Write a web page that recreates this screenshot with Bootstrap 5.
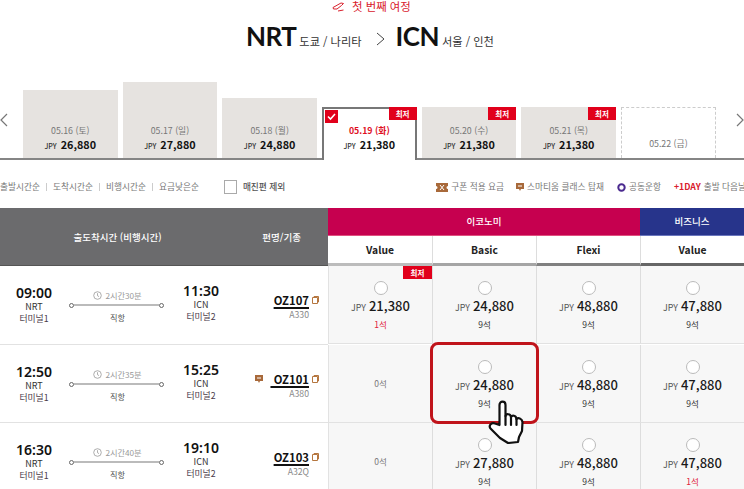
<!DOCTYPE html>
<html lang="ko">
<head>
<meta charset="utf-8">
<title>항공편 선택</title>
<link href="https://cdn.jsdelivr.net/npm/bootstrap@5.3.0/dist/css/bootstrap.min.css" rel="stylesheet">
<style>
html,body{width:744px;height:489px;overflow:hidden;background:#fff}
body{font-family:"Noto Sans CJK KR","Noto Sans",sans-serif;color:#222;font-size:9px;line-height:1.2}
.trip-label{height:13px;color:#d9202c;font-size:11.4px;line-height:13px;padding-left:332px;gap:8px}
.route-line{height:40px;margin-top:4px;padding-left:247px;align-items:baseline;padding-top:3px}
.code{font-family:"Lato","Noto Sans",sans-serif;font-size:26px;line-height:33px;font-weight:700;color:#111;letter-spacing:-.5px}
.code-first{margin-left:-1px}
.city{font-size:11.2px;color:#333;margin-left:3px}
.route-arrow{margin:0 10px 0 15px;align-self:center}
.strip{height:78px;margin-top:25px;border-bottom:2px solid #858585;align-items:flex-end}
.chev{width:8px;flex:none;margin-bottom:31px}
.chev-l{margin-right:15px}
.chev-r{margin-left:20px}
.bars{gap:5.2px;align-items:flex-end}
.bar{width:94.5px;background:#e6e3e0;text-align:center;padding-bottom:5px;position:relative;display:flex;flex-direction:column;justify-content:flex-end}
.h-a{height:68px}.h-b{height:76px}.h-c{height:60px}.h-d{height:51px}
.bar-date{color:#777;font-size:8.8px;line-height:13px}
.bar-price{font-size:10.8px;line-height:14px;font-weight:700;color:#111}
.bar-price span{font-size:7px;font-weight:500;color:#333;margin-right:4px}
.bar-on{background:#fff;border:2px solid #777;border-bottom:0;margin-bottom:-2px;height:53px;padding-bottom:7px}
.bar-on .bar-date{color:#e0101f;font-weight:700}
.bar-none{background:#fff;border:1px dashed #ccc;border-bottom:0;padding-bottom:8px}
.low-tag{position:absolute;top:0;right:0;width:28px;height:13px;background:#e1001b;color:#fff;font-size:7.5px;font-weight:700;line-height:13px;text-align:center}
.bar-on .low-tag{top:-2px;right:-2px}
.check-box{position:absolute;left:1px;top:1px;width:13px;height:13px;background:#e1001b}
.filters{height:41px;margin-top:7px;align-items:center;color:#777;font-size:8.7px;white-space:nowrap;padding-bottom:1px;overflow:hidden;width:744px}
.filters>*{flex:none}
.sep{width:1px;height:8px;background:#ccc;margin:0 6px}
.fake-check{width:13px;height:14px;border:1px solid #aaa;margin:0 6px 0 25px;flex:none}
.sold-out{color:#555;font-weight:500}
.legend-gap{margin-left:151px}
.legend-item{margin-right:12px;gap:3px;align-items:center}
.nudge{margin-left:1px}
.day-tag{color:#d9202c;font-weight:700}
.table-wrap{position:relative}
.row-grid{display:grid;grid-template-columns:328px repeat(4,104px)}
.head-left{grid-row:span 2;background:#6b6b6d;color:#fff;font-size:9.5px;font-weight:500;height:58px;padding-top:2px;border-bottom:1px solid #555}
.head-time{width:235px;text-align:center}
.head-flight{width:93px;text-align:right;padding-right:27px}
.cabin{height:28px;color:#fff;font-size:9.5px;font-weight:500;border-bottom:1px solid #e0507f;padding-top:1px}
.cabin-eco{grid-column:span 3;background:#c6004f}
.cabin-biz{background:#27348b;border-bottom-color:#6a76bd}
.fare{height:30px;font-size:10.3px;font-weight:700;color:#222;border-left:1px solid #ddd;border-bottom:3px solid #bbb;padding-top:1px}
.fare-1{border-left:0;border-bottom-color:#bcbcbc}
.fare-2{border-bottom-color:#a5a5a5}
.fare-3{border-bottom-color:#808080}
.fare-4{border-bottom-color:#666}
.flight{height:78px;border-bottom:1px solid #e2e2e2}
.tall{height:79px}
.flight-last{height:70px}
.stop{width:68px;text-align:center;padding-top:19px;flex:none}
.stop-arr{padding-top:17px}
.clock{font-family:"Noto Sans",sans-serif;font-size:14px;line-height:16px;font-weight:600;color:#111}
.port{font-size:9px;line-height:11px;color:#333}
.term{font-size:8.8px;line-height:11px;color:#4a3b4a;margin-top:1px}
.path{width:99px;text-align:center;padding-top:22px;flex:none}
.dur{font-size:8.2px;line-height:14px;color:#999;gap:3px}
.rail{height:6px;margin:0 3px 0 1px;display:flex;align-items:center}
.rail i{flex:1;height:2px;background:#bbb}
.rail b{width:5px;height:5px;border:1px solid #666;border-radius:50%;background:#fff;flex:none}
.direct{font-size:8.2px;line-height:14px;color:#555;margin-top:2px}
.flt{width:93px;padding-top:26px;flex:none;text-align:right;padding-right:9px}
.flt-no{font-size:11.3px;line-height:16px;font-weight:700;color:#111;gap:3px}
.flt-no u{text-underline-offset:2px;text-decoration-thickness:1.5px}
.flt-type{font-size:8.7px;line-height:14px;color:#888;padding-right:10px}
.cell{background:#f7f7f7;border-left:1px solid #ddd;border-bottom:1px solid #e2e2e2;text-align:center;padding-top:15px;position:relative;height:78px}
.cell-first{border-left:1px solid #e2e2e2}
.cell-last{height:70px}
.dot{width:14px;height:14px;background:#fff;border:1px solid #bbb;border-radius:50%;margin:0 auto 2px}
.amt{font-size:13px;line-height:18px;font-weight:500;color:#1a1a1a}
.amt span{font-size:8.8px;font-weight:400;color:#555;margin-right:3px}
.seats{font-size:8.5px;line-height:14px;color:#333}
.seats-few{color:#e0203a}
.none{font-size:8.5px;line-height:14px;color:#777;padding-top:16px}
.cell-tag{right:0;top:0;width:29px}
.pick-box{position:absolute;left:430px;top:134px;width:109px;height:82px;border:3px solid #c0141b;border-radius:8px;pointer-events:none}
.hand{position:absolute;left:488px;top:192px;width:36px;height:44px}
</style>
</head>
<body>
<div class="d-flex align-items-center trip-label">
  <svg width="12" height="10" viewBox="0 0 12 10" fill="none" stroke="#d9202c" stroke-width="1"><path d="M1 5.5 L9 1 L11.5 1.5 L9.5 3.5 L5 7 L1.5 7 Z"/><path d="M6 9 L11.5 8"/></svg>
  <span>첫 번째 여정</span>
</div>
<div class="d-flex route-line">
  <span class="code code-first">NRT</span><span class="city">도쿄 / 나리타</span>
  <svg class="route-arrow" width="9" height="14" viewBox="0 0 9 14" fill="none" stroke="#444" stroke-width="1"><path d="M1 1 L8 7 L1 13"/></svg>
  <span class="code">ICN</span><span class="city">서울 / 인천</span>
</div>
<div class="d-flex strip">
  <svg class="chev chev-l" height="14" viewBox="0 0 8 14" fill="none" stroke="#777" stroke-width="1.2"><path d="M7 1 L1 7 L7 13"/></svg>
  <div class="d-flex bars">
    <div class="bar h-a"><div class="bar-date">05.16 (토)</div><div class="bar-price"><span>JPY</span>26,880</div></div>
    <div class="bar h-b"><div class="bar-date">05.17 (일)</div><div class="bar-price"><span>JPY</span>27,880</div></div>
    <div class="bar h-c"><div class="bar-date">05.18 (월)</div><div class="bar-price"><span>JPY</span>24,880</div></div>
    <div class="bar bar-on">
      <div class="check-box"><svg class="d-block" width="13" height="13" viewBox="0 0 13 13" fill="none" stroke="#fff" stroke-width="1.6"><path d="M3 6.5 L5.5 9 L10 4"/></svg></div>
      <div class="low-tag">최저</div>
      <div class="bar-date">05.19 (화)</div><div class="bar-price"><span>JPY</span>21,380</div>
    </div>
    <div class="bar h-d"><div class="low-tag">최저</div><div class="bar-date">05.20 (수)</div><div class="bar-price"><span>JPY</span>21,380</div></div>
    <div class="bar h-d"><div class="low-tag">최저</div><div class="bar-date">05.21 (목)</div><div class="bar-price"><span>JPY</span>21,380</div></div>
    <div class="bar h-d bar-none"><div class="bar-date">05.22 (금)</div></div>
  </div>
  <svg class="chev chev-r" height="14" viewBox="0 0 8 14" fill="none" stroke="#777" stroke-width="1.2"><path d="M1 1 L7 7 L1 13"/></svg>
</div>
<div class="d-flex filters">
  <span>출발시간순</span><i class="sep"></i><span>도착시간순</span><i class="sep"></i><span>비행시간순</span><i class="sep"></i><span>요금낮은순</span>
  <i class="fake-check"></i><span class="sold-out">매진편 제외</span>
  <span class="d-flex legend-item legend-gap"><svg width="12" height="9" viewBox="0 0 12 9"><path d="M0 0H12V3A1.5 1.5 0 0 0 12 6V9H0V6A1.5 1.5 0 0 0 0 3Z" fill="#a8693a"/><path d="M4 2 L8 7 M8 2 L4 7" stroke="#fff"/></svg>구폰 적용 요금</span>
  <span class="d-flex legend-item"><svg width="8" height="9" viewBox="0 0 8 9"><path d="M0 0H8V6H5L4 8L3 6H0Z" fill="#a8693a"/><path d="M2 3H6" stroke="#fff"/></svg>스마티움 클래스 탑재</span>
  <span class="d-flex legend-item nudge"><svg width="9" height="9" viewBox="0 0 9 9" fill="none" stroke="#4b2a8f" stroke-width="2"><circle cx="4.5" cy="4.5" r="3.2"/></svg>공동운항</span>
  <span class="d-flex legend-item nudge"><span class="day-tag">+1DAY</span>출발 다음날</span>
</div>
<div class="table-wrap">
  <div class="row-grid">
    <div class="head-left d-flex align-items-center"><div class="head-time">출도착시간 (비행시간)</div><div class="head-flight">편명/기종</div></div>
    <div class="cabin cabin-eco d-flex align-items-center justify-content-center">이코노미</div>
    <div class="cabin cabin-biz d-flex align-items-center justify-content-center">비즈니스</div>
    <div class="fare fare-1 d-flex align-items-center justify-content-center">Value</div>
    <div class="fare fare-2 d-flex align-items-center justify-content-center">Basic</div>
    <div class="fare fare-3 d-flex align-items-center justify-content-center">Flexi</div>
    <div class="fare fare-4 d-flex align-items-center justify-content-center">Value</div>

    <div class="flight tall d-flex">
      <div class="stop"><div class="clock">09:00</div><div class="port">NRT</div><div class="term">터미널1</div></div>
      <div class="path"><div class="dur d-flex justify-content-center align-items-center"><svg width="9" height="9" viewBox="0 0 9 9" fill="none" stroke="#999" stroke-width=".8"><circle cx="4.5" cy="4.5" r="3.8"/><path d="M4.5 2.2V4.7L6 5.6"/></svg>2시간30분</div><div class="rail"><b></b><i></i><b></b></div><div class="direct">직항</div></div>
      <div class="stop stop-arr"><div class="clock">11:30</div><div class="port">ICN</div><div class="term">터미널2</div></div>
      <div class="flt"><div class="flt-no d-flex justify-content-end align-items-center"><u>OZ107</u><svg width="7" height="8" viewBox="0 0 7 8" fill="none" stroke="#b5763f"><path d="M.5 1.5H5.5V7.5H.5ZM2 1.5V.5H6.5V6H5.5"/></svg></div><div class="flt-type">A330</div></div>
    </div>
    <div class="cell tall cell-first"><div class="low-tag cell-tag">최저</div><div class="dot"></div><div class="amt"><span>JPY</span>21,380</div><div class="seats seats-few">1석</div></div>
    <div class="cell tall"><div class="dot"></div><div class="amt"><span>JPY</span>24,880</div><div class="seats">9석</div></div>
    <div class="cell tall"><div class="dot"></div><div class="amt"><span>JPY</span>48,880</div><div class="seats">9석</div></div>
    <div class="cell tall"><div class="dot"></div><div class="amt"><span>JPY</span>47,880</div><div class="seats">9석</div></div>

    <div class="flight d-flex">
      <div class="stop"><div class="clock">12:50</div><div class="port">NRT</div><div class="term">터미널1</div></div>
      <div class="path"><div class="dur d-flex justify-content-center align-items-center"><svg width="9" height="9" viewBox="0 0 9 9" fill="none" stroke="#999" stroke-width=".8"><circle cx="4.5" cy="4.5" r="3.8"/><path d="M4.5 2.2V4.7L6 5.6"/></svg>2시간35분</div><div class="rail"><b></b><i></i><b></b></div><div class="direct">직항</div></div>
      <div class="stop stop-arr"><div class="clock">15:25</div><div class="port">ICN</div><div class="term">터미널2</div></div>
      <div class="flt"><div class="flt-no d-flex justify-content-end align-items-center"><svg class="me-1" width="8" height="9" viewBox="0 0 8 9"><path d="M0 0H8V6H5L4 8L3 6H0Z" fill="#a8693a"/><path d="M2 3H6" stroke="#fff"/></svg><u>&nbsp;OZ101</u><svg width="7" height="8" viewBox="0 0 7 8" fill="none" stroke="#b5763f"><path d="M.5 1.5H5.5V7.5H.5ZM2 1.5V.5H6.5V6H5.5"/></svg></div><div class="flt-type">A380</div></div>
    </div>
    <div class="cell cell-first"><div class="none">0석</div></div>
    <div class="cell"><div class="dot"></div><div class="amt"><span>JPY</span>24,880</div><div class="seats">9석</div></div>
    <div class="cell"><div class="dot"></div><div class="amt"><span>JPY</span>48,880</div><div class="seats">9석</div></div>
    <div class="cell"><div class="dot"></div><div class="amt"><span>JPY</span>47,880</div><div class="seats">9석</div></div>

    <div class="flight flight-last d-flex">
      <div class="stop"><div class="clock">16:30</div><div class="port">NRT</div><div class="term">터미널1</div></div>
      <div class="path"><div class="dur d-flex justify-content-center align-items-center"><svg width="9" height="9" viewBox="0 0 9 9" fill="none" stroke="#999" stroke-width=".8"><circle cx="4.5" cy="4.5" r="3.8"/><path d="M4.5 2.2V4.7L6 5.6"/></svg>2시간40분</div><div class="rail"><b></b><i></i><b></b></div><div class="direct">직항</div></div>
      <div class="stop stop-arr"><div class="clock">19:10</div><div class="port">ICN</div><div class="term">터미널2</div></div>
      <div class="flt"><div class="flt-no d-flex justify-content-end align-items-center"><u>OZ103</u><svg width="7" height="8" viewBox="0 0 7 8" fill="none" stroke="#b5763f"><path d="M.5 1.5H5.5V7.5H.5ZM2 1.5V.5H6.5V6H5.5"/></svg></div><div class="flt-type">A32Q</div></div>
    </div>
    <div class="cell cell-first cell-last"><div class="none">0석</div></div>
    <div class="cell cell-last"><div class="dot"></div><div class="amt"><span>JPY</span>27,880</div><div class="seats">9석</div></div>
    <div class="cell cell-last"><div class="dot"></div><div class="amt"><span>JPY</span>48,880</div><div class="seats">9석</div></div>
    <div class="cell cell-last"><div class="dot"></div><div class="amt"><span>JPY</span>47,880</div><div class="seats seats-few">1석</div></div>
  </div>
  <div class="pick-box"></div>
  <svg class="hand" viewBox="0 0 36 44" fill="#fff" stroke="#111" stroke-width="2.2" stroke-linejoin="round" stroke-linecap="round"><path d="M11.5 25 L11.5 5 C11.5 .5 17.5 .5 17.5 5 L17.5 16 C18 13.5 22.5 13.5 23 17 C24 15 28 15 28.5 19 C30 17.5 34 18 34.5 22 L34 31 L31 37 L30 42 L20 43 L12 38 L3 29 C0 26 3 22 7 23.5 Z"/><path d="M17.5 16V25M23 17V25M28.5 19V25" fill="none"/></svg>
</div>
<script src="https://cdn.jsdelivr.net/npm/bootstrap@5.3.0/dist/js/bootstrap.bundle.min.js"></script>
</body>
</html>
